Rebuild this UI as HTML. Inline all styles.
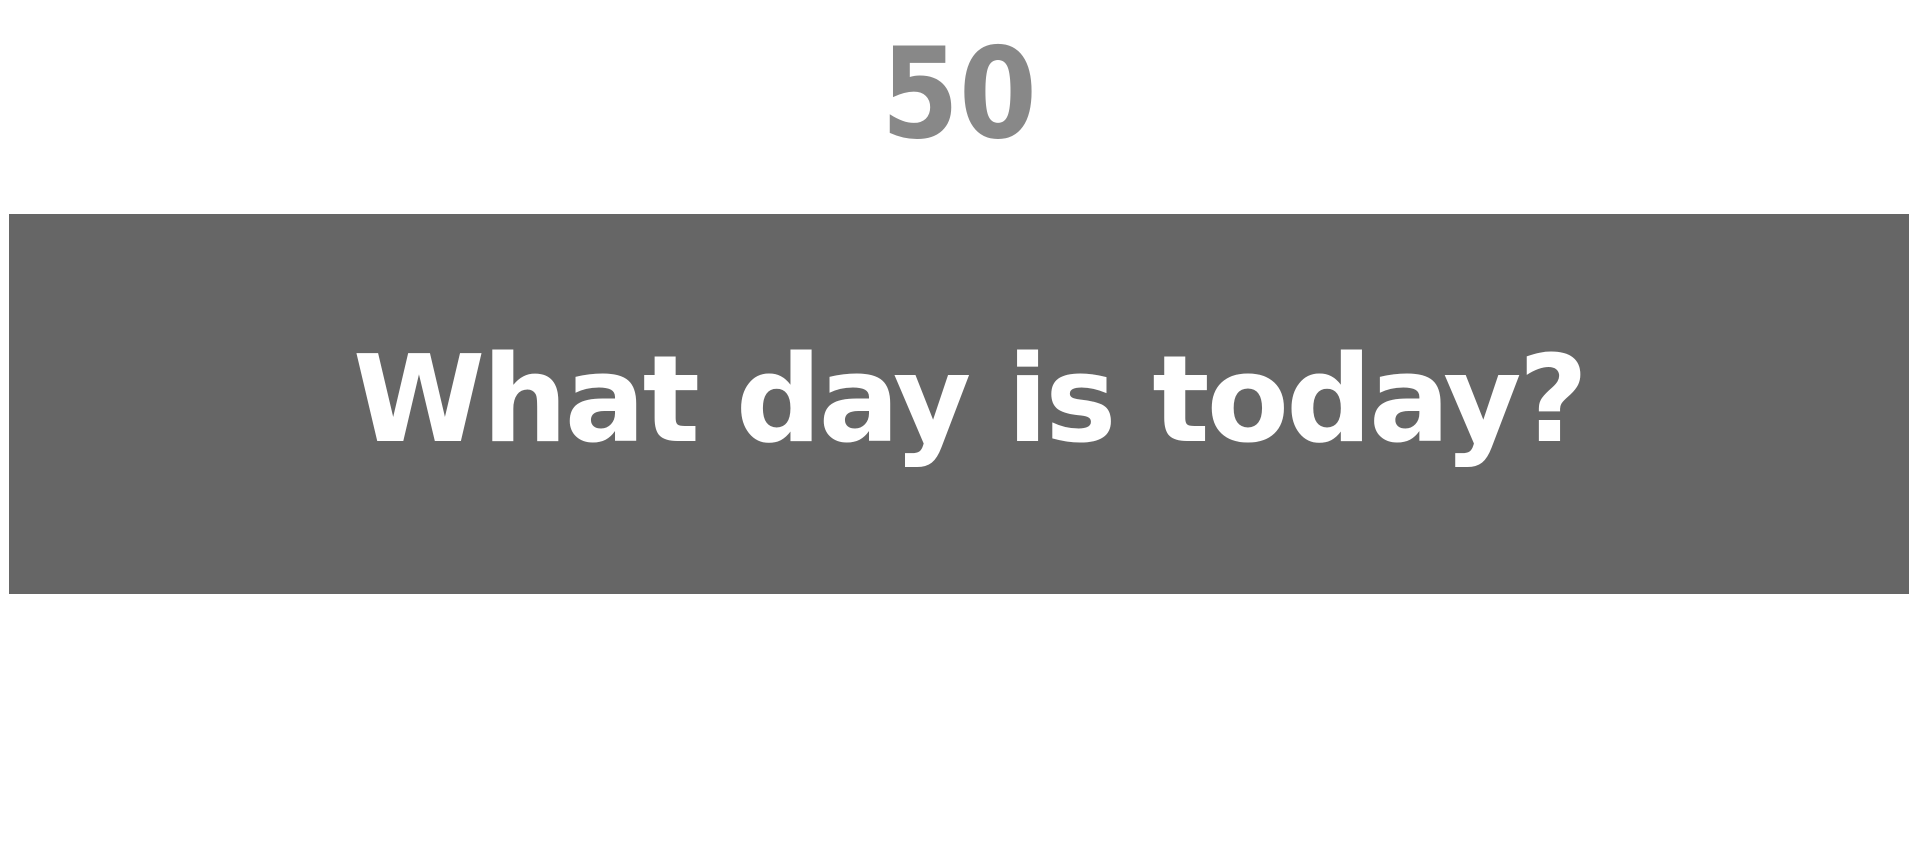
<!DOCTYPE html>
<html><head><style>
html,body{margin:0;padding:0;background:#fff;width:1918px;height:865px;overflow:hidden;position:relative;font-family:"DejaVu Sans","Liberation Sans",sans-serif;font-weight:bold}
#num{position:absolute;left:0;width:1918px;top:37px;text-align:center;font-size:112px;line-height:130px;color:#888;transform:scaleY(1.12);transform-origin:50% 100%}
#box{position:absolute;left:9px;top:214px;width:1900px;height:380px;background:#666}
#q{position:absolute;left:10px;width:1900px;top:122px;text-align:center;font-size:120px;line-height:130px;color:#fff;letter-spacing:-3px}
</style></head><body>
<div id="num">50</div>
<div id="box"><div id="q">What day is today?</div></div>
</body></html>
